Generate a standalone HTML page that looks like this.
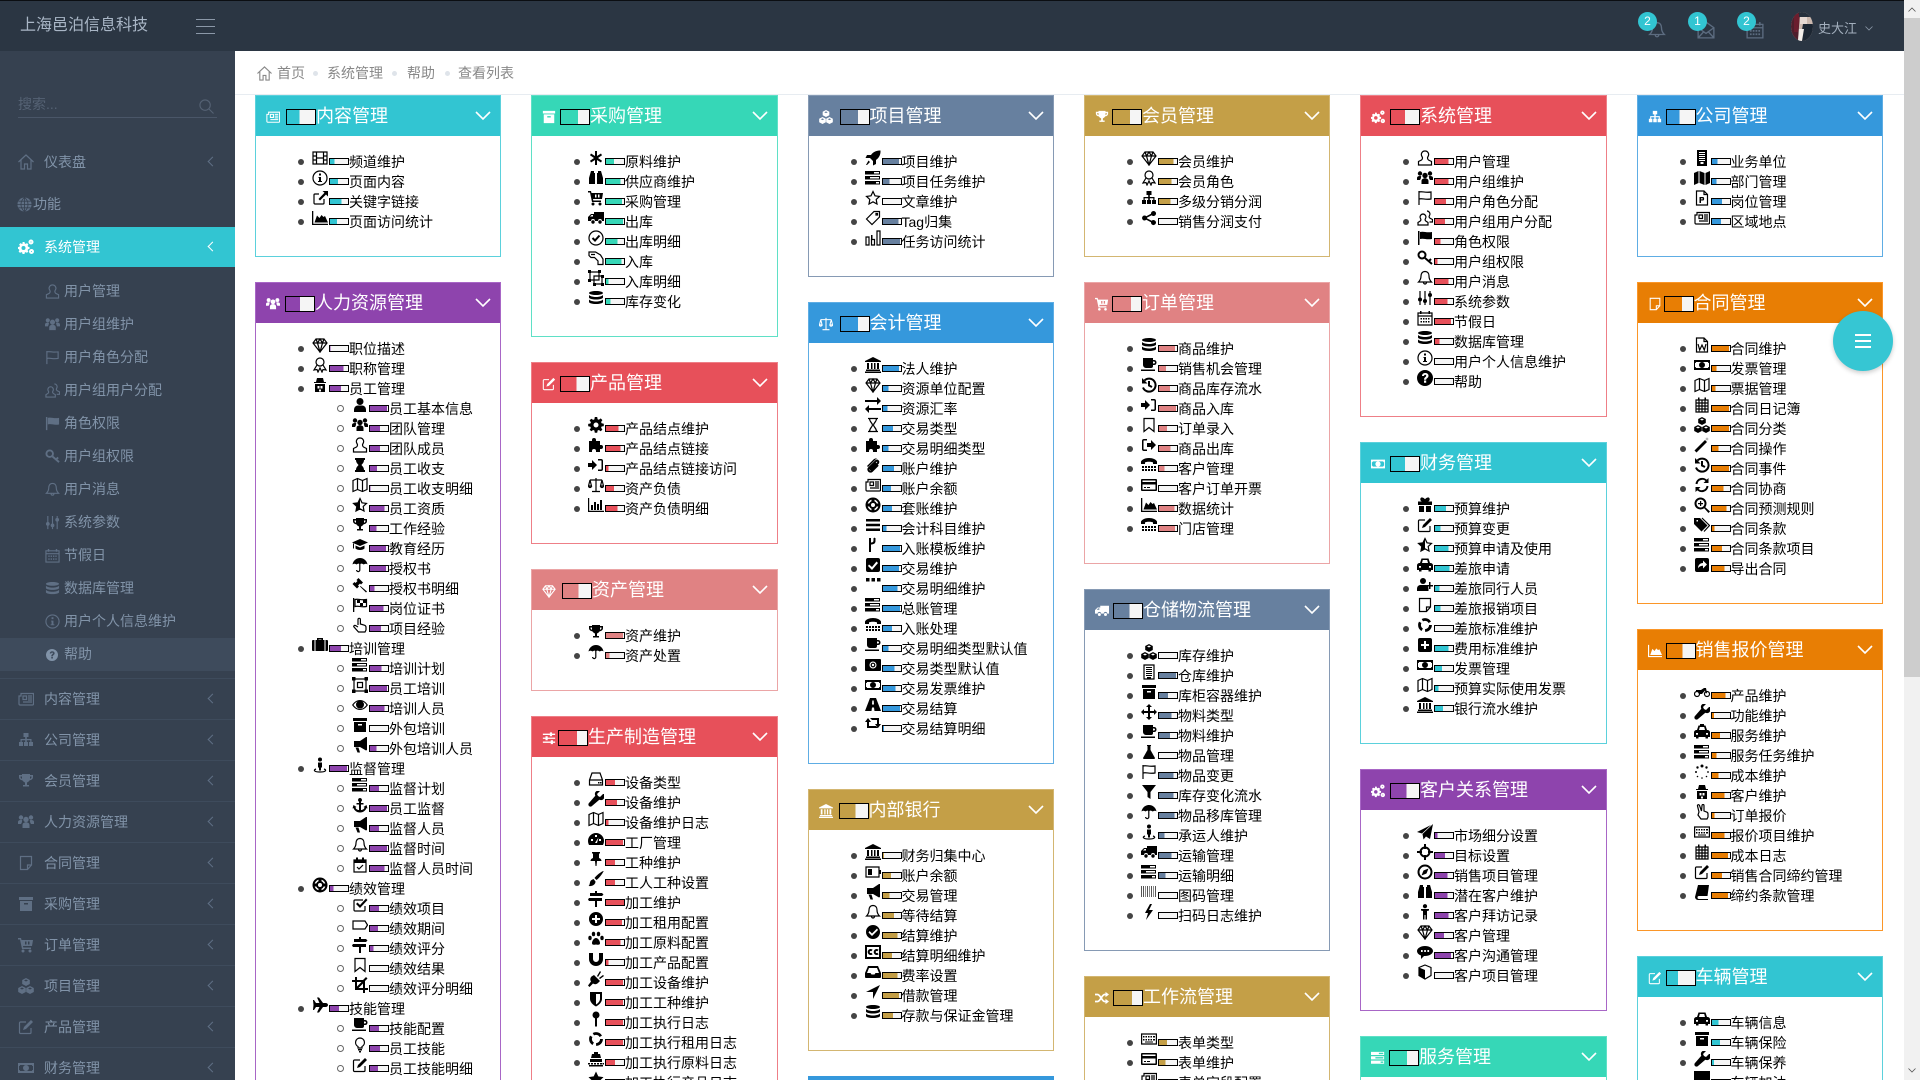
<!DOCTYPE html>
<html lang="zh"><head><meta charset="utf-8"><title>查看列表</title>
<style>
html,body{margin:0;padding:0;width:1920px;height:1080px;overflow:hidden;background:#fff;font:14px "Liberation Sans","WenQuanYi Zen Hei",sans-serif;color:#000}
#root{position:absolute;left:0;top:0;width:1920px;height:1080px;overflow:hidden;background:#fff}
svg{fill:currentColor}
.o{fill:none;stroke:currentColor;stroke-width:1.2}
.o2{fill:none;stroke:currentColor;stroke-width:2}
#top{position:absolute;left:0;top:0;width:1904px;height:51px;background:#2b3643;border-top:1px solid #0b0e12;box-sizing:border-box}
#logo{position:absolute;left:20px;top:0;line-height:49px;font-size:16px;color:#a9b6c6}
#burger{position:absolute;left:196px;top:18px;width:19px;height:13px;border-top:1px solid #8b98a8;border-bottom:1px solid #8b98a8}
#burger:after{content:"";position:absolute;left:0;right:0;top:6px;height:1px;background:#8b98a8}
.tb{position:absolute;top:20px;width:18px;height:18px;color:#5c6c80}
.bd{position:absolute;top:11px;width:19px;height:19px;border-radius:50%;background:#32c5d2;color:#fff;font-size:12px;line-height:19px;text-align:center}
#nm{position:absolute;left:1818px;top:0;line-height:56px;font-size:13px;color:#a3afbd}
#side{position:absolute;left:0;top:51px;width:235px;height:1029px;background:#364150;overflow:hidden}
.m,.s{position:absolute;left:0;width:235px;color:#8193a8;white-space:nowrap}
.m{height:40px;line-height:40px;text-indent:44px}
.s{height:33px;line-height:33px;text-indent:64px}
.m svg,.s svg{position:absolute;color:#5f6f84}
.m svg{left:18px;top:12px;width:16px;height:16px}
.s svg{left:45px;top:9px;width:15px;height:15px}
.m i{position:absolute;left:209px;top:16px;width:6px;height:6px;border-left:1.2px solid #5f6f84;border-bottom:1.2px solid #5f6f84;transform:rotate(45deg)}
.dv{position:absolute;left:0;width:235px;height:1px;background:#3e4b5c}
#crumb{position:absolute;left:235px;top:51px;width:1669px;height:44px;box-sizing:border-box;border-bottom:1px solid #e7ecf1;color:#888;line-height:45px;background:#fff}
#crumb span{position:absolute;top:0;white-space:nowrap}
#crumb u{position:absolute;top:20px;width:5px;height:5px;border-radius:50%;background:#dfe4ea}
.c{position:absolute;width:246px;box-sizing:border-box;border:1px solid var(--b);background:#fff;overflow:hidden}
.w{width:247px}
.c h3{position:relative;margin:0;height:40px;background:var(--c);color:#fff;font-size:18px;font-weight:400;line-height:40px;padding-left:calc(var(--l) + 29px);white-space:nowrap}
.c h3>svg:first-child{position:absolute;left:10px;top:14px;width:14px;height:14px;color:#fff}
.c h3 b{position:absolute;left:calc(var(--l) - 1px);top:13px;width:30px;height:16px;box-sizing:border-box;border:1px solid #000;background:linear-gradient(90deg,var(--c) var(--p),#f5f5f5 0)}
.c h3 .v{position:absolute;left:219px;top:15px;width:16px;height:10px;color:#fff}
.w h3 .v{left:220px}
.c ul{list-style:none;margin:16px 0 0;padding:0 0 0 55px}
.c ul ul{margin:0;padding-left:40px}
.c li{position:relative;line-height:20px;white-space:nowrap}
.c li>span{display:block;height:20px;padding-left:38px}
.c li:before{content:"";position:absolute;left:-13px;top:7px;width:6px;height:6px;border-radius:50%;background:#444}
.c ul ul>li:before{left:-14px;top:6px;width:5px;height:5px;background:#fff;border:1.3px solid #666}
.c li svg{position:absolute;left:1px;top:-2px;width:16px;height:16px}
.c li b{position:absolute;left:18px;top:6px;width:20px;height:7px;box-sizing:border-box;border:1px solid #000;background:linear-gradient(90deg,var(--c) var(--p),#f5f5f5 0)}
.cy{--c:#32c5d2;--b:#5bd1dc}.pu{--c:#8e44ad;--b:#a866c6}.te{--c:#36d7b7;--b:#5fe0c6}.re{--c:#e7505a;--b:#ee7f87}.pi{--c:#e08283;--b:#eba5a6}.st{--c:#67809f;--b:#869ab4}.ye{--c:#c49f47;--b:#d3b671}.bl{--c:#3598dc;--b:#5eade4}.or{--c:#e87e04;--b:#fb9628}
#sb{position:absolute;left:1904px;top:0;width:16px;height:1080px;background:#f1f1f1}
#th{position:absolute;left:0;top:18px;width:16px;height:659px;background:#cdcdcd}
#fab{position:absolute;left:1833px;top:311px;width:60px;height:60px;border-radius:50%;background:#36c6d3;box-shadow:0 2px 5px rgba(0,0,0,.2)}
#fab i{position:absolute;left:22px;width:16px;height:2px;background:#fff}
</style></head><body>
<svg width="0" height="0" style="position:absolute"><defs>
<symbol id="film" viewBox="0 0 16 16"><path class="o" d="M1 2h14v12H1zM4.500 2v12M11.500 2v12M1 6h3.500M1 10h3.500M11.500 6H15M11.500 10H15M4.500 8h7"/></symbol>
<symbol id="info" viewBox="0 0 16 16"><circle class="o" cx="8" cy="8" r="7"/><path d="M7 3.500h2v2H7zM6.500 7H9v4h1v1H6v-1h1V8h-.5z"/></symbol>
<symbol id="ext" viewBox="0 0 16 16"><path class="o" d="M12 9v4a1 1 0 0 1-1 1H3a1 1 0 0 1-1-1V5a1 1 0 0 1 1-1h4"/><path d="M6.500 9l6-6.200L10.500 1H16v5.500l-2-2L8 10.500z"/></symbol>
<symbol id="area" viewBox="0 0 16 16"><path d="M0 1h1.300v12.700H16V15H0zM2.500 12.500l2.500-7 2.500 2.500 2-3 2 2 1.500-1 3 6.500z"/></symbol>
<symbol id="diamond" viewBox="0 0 16 16"><path class="o" d="M4 2h8l3 4-7 9-7-9zM1 6h14M5.500 6L8 15l2.500-9M4 2l1.500 4L8 2l2.500 4L12 2"/></symbol>
<symbol id="award" viewBox="0 0 16 16"><circle class="o" cx="8" cy="5" r="4"/><path class="o" d="M5 8L2 13l3-.5 1 2.500 2-4 2 4 1-2.500 3 .5-3-5"/></symbol>
<symbol id="secret" viewBox="0 0 16 16"><path fill-rule="evenodd" d="M5 1h6l1 4h2v1H2V5h2zM3 7h10v8H3zM5.500 9v2.500h2V9zM8.500 9v2.500h2V9zM7 12.500v2h2v-2z"/></symbol>
<symbol id="user" viewBox="0 0 16 16"><circle cx="8" cy="4.500" r="3.500"/><path d="M2 15v-2c0-3 2-4.500 4-4.500h4c2 0 4 1.500 4 4.500v2z"/></symbol>
<symbol id="users" viewBox="0 0 16 16"><circle cx="8" cy="5.500" r="2.700"/><circle cx="3" cy="3.500" r="2.200"/><circle cx="13" cy="3.500" r="2.200"/><path d="M4.500 14v-3c0-1.700 1.500-2.800 3.500-2.800s3.500 1.100 3.500 2.800v3zM0 10V8c0-1.200 1-2 3-2 .7 0 1 .2 1.300.5-.5.9-.3 1.700-.6 2.300C3.300 9.300 3.200 9.600 3.200 10zM16 10V8c0-1.200-1-2-3-2-.7 0-1 .2-1.300.5.5.9.3 1.700.6 2.300.4.500.5.800.5 1.200z"/></symbol>
<symbol id="usero" viewBox="0 0 16 16"><path class="o" d="M8 1a3.500 3.500 0 0 1 3 5.500c-.8 1.200-.5 2.800.5 3.500l3 1.500V15h-13v-3.500l3-1.500c1-.7 1.300-2.300.5-3.500A3.500 3.500 0 0 1 8 1z"/></symbol>
<symbol id="usero2" viewBox="0 0 16 16"><path class="o" d="M10 1a3 3 0 0 1 2.500 4.500c-.6 1-.4 2 .4 2.600l2.600 1.400V12h-3M6 4a3 3 0 0 1 2.500 4.500c-.6 1-.4 2 .4 2.600l2.100 1.400V15H1v-2.500l2.100-1.400c.8-.6 1-1.600.4-2.600A3 3 0 0 1 6 4z"/></symbol>
<symbol id="hour" viewBox="0 0 16 16"><path d="M3 1h10v2h-1c0 3-2 4-2.500 5 .5 1 2.500 2 2.500 5h1v2H3v-2h1c0-3 2-4 2.500-5C6 7 4 6 4 3H3z"/></symbol>
<symbol id="hourg" viewBox="0 0 16 16"><path class="o" d="M3 1.500h10M3 14.500h10M4.500 1.500c0 3.500 3 4.500 3 6.500s-3 3-3 6.500M11.500 1.500c0 3.500-3 4.500-3 6.500s3 3 3 6.500"/></symbol>
<symbol id="map" viewBox="0 0 16 16"><path class="o" d="M1 3.500l4.500-2 5 2 4.500-2v11l-4.500 2-5-2-4.500 2zM5.500 1.500v11M10.500 3.500v11"/></symbol>
<symbol id="mapf" viewBox="0 0 16 16"><path d="M0 3l4.500-2v12L0 15zM5.500 1l5 2v12l-5-2zM11.500 3L16 1v12l-4.500 2z"/></symbol>
<symbol id="star" viewBox="0 0 16 16"><path d="M8 .5l2.300 4.900 5.200.7-3.800 3.700.9 5.200L8 12.500l-4.600 2.500.9-5.200L.5 6.100l5.200-.7z"/></symbol>
<symbol id="staro" viewBox="0 0 16 16"><path class="o" d="M8 1.500l2 4.300 4.500.6-3.300 3.100.8 4.500L8 11.800l-4 2.200.8-4.500L1.500 6.400 6 5.800z"/></symbol>
<symbol id="starh" viewBox="0 0 16 16"><path class="o" d="M8 1.500l2 4.300 4.500.6-3.300 3.100.8 4.500L8 11.800l-4 2.200.8-4.500L1.500 6.400 6 5.800z"/><path d="M8 1.500v10.300l-4 2.200.8-4.500L1.500 6.400 6 5.800z"/></symbol>
<symbol id="trophy" viewBox="0 0 16 16"><path fill-rule="evenodd" d="M4 1h8v1h3v2c0 2-1.500 3-3.300 3.300C11 8.500 10 9 9 9.500V12h2v1.500H5V12h2V9.500C6 9 5 8.500 4.300 7.300 2.500 7 1 6 1 4V2h3zM2.500 3.500V4c0 1 .6 1.500 1.500 1.800V3.500zM12 3.500v2.300c.9-.3 1.500-.8 1.500-1.800v-.5z"/></symbol>
<symbol id="grad" viewBox="0 0 16 16"><path d="M8 2L0 5.500 8 9l8-3.500zM3.500 8.500v3c2 2 7 2 9 0v-3L8 10.500zM1 6.500v5h1v-5z"/></symbol>
<symbol id="umb" viewBox="0 0 16 16"><path d="M8 1C4 1 1 4 .5 7.500 2 6.500 3 6.500 4.500 7.500 6 6.500 7 6.500 7.200 7v6a1 1 0 0 1-2 0H4a2.200 2.200 0 0 0 4.400 0V7c.6-.5 1.800-.5 3.300.5 1.300-1 2.800-1 3.800 0C15 4 12 1 8 1z"/></symbol>
<symbol id="gavel" viewBox="0 0 16 16"><path d="M6.500 1L11 5.500l-2 2-1-1-2 2 1 1-2 2L.5 7l2-2 1 1 2-2-1-1zM8.500 9l6.500 5.500-1 1L8 9.500z"/></symbol>
<symbol id="flagc" viewBox="0 0 16 16"><path d="M1 1h1.300v14H1z"/><path class="o" d="M3 2.500c3-1 6 1 11.500 0v7c-5.500 1-8.500-1-11.500 0z"/><path d="M5 3h3v3H5zM8 6h3v3H8zM11 3h3v3h-3z"/></symbol>
<symbol id="hand" viewBox="0 0 16 16"><path class="o" d="M6 8V2.500a1.200 1.200 0 0 1 2.400 0V7l4 1.200c1 .3 1.600 1 1.600 2V13l-1 2H6.500L2 10c-.8-1 .5-2 1.500-1.500L6 10"/></symbol>
<symbol id="peace" viewBox="0 0 16 16"><path class="o" d="M5 8L3.500 2a1 1 0 0 1 2-.5L7.500 7 8 1.500a1 1 0 0 1 2 0V7l3 1.200c.7.300 1 1 1 2V13l-1 2H7L4 11z"/></symbol>
<symbol id="brief" viewBox="0 0 16 16"><path fill-rule="evenodd" d="M5 3V1h6v2h4a1 1 0 0 1 1 1v9a1 1 0 0 1-1 1H1a1 1 0 0 1-1-1V4a1 1 0 0 1 1-1zM6.500 3h3v-.5h-3zM2.500 3v11h1V3zM12.500 3v11h1V3z"/></symbol>
<symbol id="tasks" viewBox="0 0 16 16"><path fill-rule="evenodd" d="M0 1h15v3.500H0zM9 2v1.500h5V2zM0 6h15v3.500H0zM5 7v1.500h9V7zM0 11h15v3.500H0zM11 12v1.500h3V12z"/></symbol>
<symbol id="frame" viewBox="0 0 16 16"><path class="o" d="M2 2h12v12H2zM5.500 5.500h5v5h-5z"/><path d="M0 0h3.500v3.500H0zM12.500 0H16v3.500h-3.500zM0 12.500h3.500V16H0zM12.500 12.500H16V16h-3.500z"/></symbol>
<symbol id="eye" viewBox="0 0 16 16"><path fill-rule="evenodd" d="M8 3C4 3 1.500 6 0 8c1.500 2 4 5 8 5s6.500-3 8-5c-1.500-2-4-5-8-5zM1.500 8c1-1.500 2.500-3 4-3.500a4 4 0 1 0 5 0c1.500.5 3 2 4 3.500-1.500 2.200-4 4-6.500 4s-5-1.800-6.500-4z"/></symbol>
<symbol id="arch" viewBox="0 0 16 16"><path fill-rule="evenodd" d="M1 1h14v3H1zM2 5h12v10H2zM6 7v1.500h4V7z"/></symbol>
<symbol id="bull" viewBox="0 0 16 16"><path d="M15 0v13l-1 .5L8 10H2V4h6l6-4zM3.500 10.500h3l1.500 5H5.500z"/></symbol>
<symbol id="sv" viewBox="0 0 16 16"><circle cx="8" cy="2.500" r="2"/><path d="M6 5.500h4v5H9v3H7v-3H6z"/><path class="o" d="M4 12c-3 1-2 3 4 3s7-2 4-3"/></symbol>
<symbol id="anchor" viewBox="0 0 16 16"><path d="M8 1a2 2 0 0 1 1 3.700V6h2.500v1.500H9V13c2 0 3.200-1.200 3.500-2.500l-1-.5 3-2 1 3.500-1-.5C14 13 11.500 15.500 8 15.500S2 13 1.500 11l-1 .5 1-3.500 3 2-1 .5c.3 1.300 1.500 2.500 3.500 2.500V7.500H4.500V6H7V4.700A2 2 0 0 1 8 1z"/></symbol>
<symbol id="bell" viewBox="0 0 16 16"><path class="o" d="M8 1.500c-3 0-4 2.500-4 4.500 0 3-1.500 5-2.500 6h13c-1-1-2.500-3-2.500-6 0-2-1-4.500-4-4.500zM6.500 12.500a1.500 1.500 0 0 0 3 0"/></symbol>
<symbol id="calc" viewBox="0 0 16 16"><path class="o" d="M2 3h12v12H2z"/><path d="M1.500 3h13v3h-13zM4 .5h2v3H4zM10 .5h2v3h-2z"/><path class="o" d="M5 10l2 2 4-4"/></symbol>
<symbol id="life" viewBox="0 0 16 16"><circle class="o2" cx="8" cy="8" r="6.500"/><circle class="o2" cx="8" cy="8" r="3"/><path d="M6.500 1h3v3.500h-3zM6.500 11.500h3V15h-3zM1 6.500h3.500v3H1zM11.500 6.500H15v3h-3.500z"/></symbol>
<symbol id="chk" viewBox="0 0 16 16"><path fill-rule="evenodd" d="M3 1h10a2 2 0 0 1 2 2v10a2 2 0 0 1-2 2H3a2 2 0 0 1-2-2V3a2 2 0 0 1 2-2zM4 7.500L3 9l4 4 6-7-1.500-1.500L7 10z"/></symbol>
<symbol id="chko" viewBox="0 0 16 16"><path class="o" d="M13 9v4a1 1 0 0 1-1 1H3a1 1 0 0 1-1-1V4a1 1 0 0 1 1-1h8"/><path d="M4 7l1.500-1.500L8 8l6-6.500L15.500 3 8 11z"/></symbol>
<symbol id="tago" viewBox="0 0 16 16"><path class="o" d="M1 4h12l2.500 4-2.500 4H1z"/></symbol>
<symbol id="tag" viewBox="0 0 16 16"><path class="o" d="M1.500 9L9 1.500h5.500V7L7 14.500zM11 3.500h1.500V5H11z"/></symbol>
<symbol id="signs" viewBox="0 0 16 16"><path d="M7 0h2v2h5l1.500 1.500L14 5H2V2h5zM1 7h13v3H9v6H7v-6H1L0 8.500z"/></symbol>
<symbol id="bookm" viewBox="0 0 16 16"><path class="o" d="M3 1.500h10v13l-5-4-5 4z"/></symbol>
<symbol id="crop" viewBox="0 0 16 16"><path fill-rule="evenodd" d="M3 0h2v3h6l3-3 1.500 1.500-2.500 2.500V11h3v2h-3v3h-2v-3H3V5H0V3h3zM5 5v4.500L9.500 5zM6.500 11H11V6.500z"/></symbol>
<symbol id="plane" viewBox="0 0 16 16"><path d="M2 3l2 3h3.500L5 .5h2L11 6h2.500c1.500 0 2.500 1 2.500 2s-1 2-2.500 2H11l-4 5.500H5L7.500 10H4l-2 3H1l.5-5L1 3z"/></symbol>
<symbol id="coffee" viewBox="0 0 16 16"><path fill-rule="evenodd" d="M2 1h10v2h1c1.700 0 2.500 1 2.500 2.500S14.700 8 13 8h-1v1a2 2 0 0 1-2 2H5a3 3 0 0 1-3-3zM12 4.500v2h1c.6 0 1-.5 1-1s-.4-1-1-1zM0 12.500h14V14H0z"/></symbol>
<symbol id="bulb" viewBox="0 0 16 16"><path class="o" d="M8 1a4.500 4.500 0 0 0-2 8.500V11h4V9.500A4.500 4.500 0 0 0 8 1z"/><path d="M6 12h4v1.500H6zM7 14h2v1.500H7z"/></symbol>
<symbol id="edit" viewBox="0 0 16 16"><path class="o" d="M13 9v4.500a1 1 0 0 1-1 1H2.500a1 1 0 0 1-1-1V4a1 1 0 0 1 1-1H8"/><path d="M13 1l2 2-7 7-3 1 1-3z"/></symbol>
<symbol id="aster" viewBox="0 0 16 16"><path d="M7 1h2v5l4-2.500 1 1.700L10 8l4 2.800-1 1.700L9 10v5H7v-5l-4 2.500-1-1.700L6 8 2 5.200l1-1.700L7 6z"/></symbol>
<symbol id="binoc" viewBox="0 0 16 16"><path d="M3 1h3v2h1v11H1V8zM10 1h3l2 7v6H9V3h1z"/></symbol>
<symbol id="cart" viewBox="0 0 16 16"><path fill-rule="evenodd" d="M0 1h3l.5 2H15l-1 6H5l.3 1.500H13V12H4L2 2.500H0zM7 4.500v3h1.500v-3zM10 4.500v3h1.500v-3z"/><circle cx="5" cy="14" r="1.500"/><circle cx="12" cy="14" r="1.500"/></symbol>
<symbol id="truck" viewBox="0 0 16 16"><path fill-rule="evenodd" d="M6 2h10v9h-2a2 2 0 0 0-4 0H7a2 2 0 0 0-4 0H0V7l3-3h3zM2 6.500h3V5H3.500z"/><circle cx="5" cy="12" r="1.700"/><circle cx="12" cy="12" r="1.700"/></symbol>
<symbol id="checkc" viewBox="0 0 16 16"><circle class="o" cx="8" cy="8" r="7"/><path class="o2" d="M4.500 8l2.500 2.500 4.500-5"/></symbol>
<symbol id="checkf" viewBox="0 0 16 16"><path fill-rule="evenodd" d="M8 1a7 7 0 1 0 0 14A7 7 0 0 0 8 1zM4.500 7L3.500 8.500 7 12l6-6-1-1.500-5 5z"/></symbol>
<symbol id="lizard" viewBox="0 0 16 16"><path class="o" d="M1 2h6.500l5 3 2.500 4v5.500h-5V11L6.500 7.500H3L1 5.500zM3 4.500h4"/></symbol>
<symbol id="objg" viewBox="0 0 16 16"><path class="o" d="M2 2h9v8H2zM6 6h8v8H6z"/><path d="M0 0h3v3H0zM10 0h3v3h-3zM0 9h3v3H0zM13 5h3v3h-3zM13 13h3v3h-3zM5 13h3v3H5z"/></symbol>
<symbol id="db" viewBox="0 0 16 16"><path d="M8 1c4 0 7 .9 7 2s-3 2-7 2-7-.9-7-2 3-2 7-2zM1 5c1 1.200 4 2 7 2s6-.8 7-2v2.500c0 1.100-3 2-7 2s-7-.9-7-2zM1 9.500c1 1.200 4 2 7 2s6-.8 7-2V12c0 1.100-3 2-7 2s-7-.9-7-2z"/></symbol>
<symbol id="cog" viewBox="0 0 16 16"><path fill-rule="evenodd" d="M6.800 0h2.400l.4 2.200 1.300.5 1.800-1.300 1.700 1.700L13.100 5l.5 1.300 2.200.4v2.400l-2.200.4-.5 1.300 1.300 1.800-1.700 1.700-1.800-1.300-1.300.5-.4 2.200H6.800l-.4-2.200-1.300-.5-1.800 1.300-1.700-1.700L2.900 11l-.5-1.300-2.200-.4V6.900l2.200-.4.500-1.300-1.300-1.800 1.700-1.700 1.800 1.200 1.300-.5zM8 5.500a2.500 2.500 0 1 0 0 5 2.500 2.500 0 0 0 0-5z"/></symbol>
<symbol id="cogs" viewBox="0 0 16 16"><path fill-rule="evenodd" d="M4.500 3h2l.3 1.500.9.400 1.300-.8 1.400 1.400-.8 1.300.4.900 1.500.3v2l-1.500.3-.4.900.8 1.300-1.400 1.400-1.300-.8-.9.4-.3 1.500h-2l-.3-1.500-.9-.4-1.300.8-1.400-1.400.8-1.300-.4-.9L0 10V8l1.500-.3.400-.9-.8-1.300 1.400-1.400 1.300.8.900-.4zM5.500 7a2 2 0 1 0 0 4 2 2 0 0 0 0-4z"/><circle class="o2" cx="13" cy="3" r="1.500"/><circle class="o2" cx="13.500" cy="12.500" r="1.500"/></symbol>
<symbol id="puzzle" viewBox="0 0 16 16"><path d="M6 1a2 2 0 0 1 2 2v1h4v4h1a2 2 0 0 1 0 4h-1v3H8v-1a2 2 0 0 0-4 0v1H1V4h3V3a2 2 0 0 1 2-2z"/></symbol>
<symbol id="signin" viewBox="0 0 16 16"><path d="M0 6h4V3l5 5-5 5v-3H0zM10 2h3a2 2 0 0 1 2 2v8a2 2 0 0 1-2 2h-3v-1.500h3c.3 0 .5-.2.5-.5V4c0-.3-.2-.5-.5-.5h-3z"/></symbol>
<symbol id="signout" viewBox="0 0 16 16"><path d="M6 2v1.500H3c-.3 0-.5.2-.5.5v8c0 .3.2.5.5.5h3V14H3a2 2 0 0 1-2-2V4a2 2 0 0 1 2-2zM6 6h4V3l5 5-5 5v-3H6z"/></symbol>
<symbol id="balance" viewBox="0 0 16 16"><path class="o" d="M8 1v13M4 14.500h8M2 3h12M2 3L.5 9h3zM14 3l-1.500 6h3zM.5 9a1.500 1.500 0 0 0 3 0M12.500 9a1.500 1.500 0 0 0 3 0"/></symbol>
<symbol id="bars" viewBox="0 0 16 16"><path d="M0 1h1.200v12.800H16V15H0zM3 8h2v5H3zM6 5h2v8H6zM9 7h2v6H9zM12 3h2v10h-2z"/></symbol>
<symbol id="barso" viewBox="0 0 16 16"><path class="o" d="M1 7h3v8H1zM6.500 9.500h3V15h-3zM12 1h3v14h-3z"/><path d="M6 5h1.500v4H6z"/></symbol>
<symbol id="hdd" viewBox="0 0 16 16"><path class="o" d="M4 2h8l2.500 7v5h-13V9zM1.500 9h13"/><path d="M10 11h1.500v1.500H10zM12 11h1.500v1.500H12z"/></symbol>
<symbol id="wrench" viewBox="0 0 16 16"><path d="M15 3l-3 3-2-1-1-2 3-3c-2-1-4.500 0-5 2-.3 1.200 0 2 .3 2.700L1 12a2 2 0 0 0 3 3l7.300-6.300c.7.300 1.500.6 2.700.3 2-.5 3-3 2-6z"/></symbol>
<symbol id="dash" viewBox="0 0 16 16"><path fill-rule="evenodd" d="M8 2a8 8 0 0 0-8 8c0 1.500.5 3 1 4h14c.5-1 1-2.500 1-4a8 8 0 0 0-8-8zM7 4v2h2V4zM3 8v2h2V8zM11 8v2h2V8zM7 12h2L10.500 6.500z"/></symbol>
<symbol id="pin" viewBox="0 0 16 16"><path d="M4 1h8v1.500h-1V7c1.500.5 2.500 1.500 2.500 3H9l-.5 5h-1L7 10H2.500c0-1.500 1-2.500 2.500-3V2.500H4z"/></symbol>
<symbol id="brush" viewBox="0 0 16 16"><path d="M15.500 0c.5.5-4 7-7 9l-2-2c2-3 8.500-7.500 9-7zM5.500 8l2 2.500c0 3-3 5-7 4.500 1.500-1 1-3 2-5 .5-1 2-1.500 3-2z"/></symbol>
<symbol id="plusc" viewBox="0 0 16 16"><path fill-rule="evenodd" d="M8 1a7 7 0 1 0 0 14A7 7 0 0 0 8 1zM7 4h2v3h3v2H9v3H7V9H4V7h3z"/></symbol>
<symbol id="paw" viewBox="0 0 16 16"><ellipse cx="5.500" cy="3" rx="1.700" ry="2.300"/><ellipse cx="10.500" cy="3" rx="1.700" ry="2.300"/><ellipse cx="2" cy="7" rx="1.700" ry="2.200"/><ellipse cx="14" cy="7" rx="1.700" ry="2.200"/><path d="M8 7c2 0 4 3 4 5s-1.500 2-4 1.500C5.500 14 4 14 4 12s2-5 4-5z"/></symbol>
<symbol id="magnet" viewBox="0 0 16 16"><path d="M1 2h4v6a3 3 0 0 0 6 0V2h4v6a7 7 0 0 1-14 0z"/></symbol>
<symbol id="plug" viewBox="0 0 16 16"><path d="M9 5l3-5 1 1-3 5zM11 7l4-3 1 1-4 3zM6 4l6 6-2 2c-1.500 1.500-3.500 1.500-5 .5L1.500 16 0 14.500l3-4c-1-1.500-1-3.500.5-5z"/></symbol>
<symbol id="shield" viewBox="0 0 16 16"><path fill-rule="evenodd" d="M2 1h12v7c0 3-3 6-6 7.500C5 14 2 11 2 8zM8 3v10.500c2-1 4-3.500 4-5.500V3z"/></symbol>
<symbol id="mappin" viewBox="0 0 16 16"><circle cx="8" cy="4" r="3.500"/><path d="M7 7h2v8.500H7z"/></symbol>
<symbol id="recycle" viewBox="0 0 16 16"><circle cx="8" cy="8" r="5.500" fill="none" stroke="currentColor" stroke-width="2.800" stroke-dasharray="8.500 3"/></symbol>
<symbol id="ship" viewBox="0 0 16 16"><path d="M6 1h4v2h2l1 4H3l1-4h2zM2 8h12v3H2z"/><path d="M0 12h2v1.500H0zM3 12h2v1.500H3zM6 12h2v1.500H6zM9 12h2v1.500H9zM12 12h2v1.500h-2zM14.500 12H16v1.500h-1.500zM1 14h14v1.500H1z"/></symbol>
<symbol id="rocket" viewBox="0 0 16 16"><path d="M15.500.5c.3 4-1.500 7.500-4.500 9.500v4L8 15.500V11L5 8H.5L2 5h4C8 2 11.500.2 15.500.5zM3.500 10.500L5 12l-3 3H1z"/></symbol>
<symbol id="bank" viewBox="0 0 16 16"><path d="M8 0l8 4v1H0V4zM2 6h2v6H2zM6 6h1.500v6H6zM9 6h1.500v6H9zM12 6h2v6h-2zM1 12.500h14V14H1zM0 14.500h16V16H0z"/></symbol>
<symbol id="exch" viewBox="0 0 16 16"><path d="M0 3h12V0l4 4-4 4V5H0zM16 11H4V8l-4 4 4 4v-3h12z"/></symbol>
<symbol id="clip" viewBox="0 0 16 16"><path class="o2" d="M13 8l-6 6c-2 2-5-1-3-3l7-7c1-1 3 0 2 2l-6 6c-1 1-2 0-1-1l5-5"/><path d="M2 9l7-7 3-1-9 9z"/></symbol>
<symbol id="news" viewBox="0 0 16 16"><path class="o" d="M3 2.500h12.500V13a1 1 0 0 1-1 1H2a1 1 0 0 1-1-1V5h2zM5 5v3.500h3.500V5zM10 5h4M10 7h4M10 9h4M5 11h9"/></symbol>
<symbol id="bars3" viewBox="0 0 16 16"><path d="M1 2h14v2.500H1zM1 6.800h14v2.500H1zM1 11.500h14V14H1z"/></symbol>
<symbol id="fork" viewBox="0 0 16 16"><path d="M4 1h2v4.500c1.500 0 2.500-.5 2.500-2V2H8l1.500-1.500L11 2h-.5v2c0 2.500-2 3.500-4.500 3.500V15H4z"/></symbol>
<symbol id="dots" viewBox="0 0 16 16"><path d="M1 1h3.500v3.500H1zM6.500 1H10v3.500H6.500zM12 1h3.500v3.500H12z"/></symbol>
<symbol id="tty" viewBox="0 0 16 16"><path d="M8 1c4 0 7 1.500 8 3.500V7h-4V5.500C11 4.500 5 4.500 4 5.500V7H0V4.500C1 2.500 4 1 8 1zM1 9h2v2H1zM4 9h2v2H4zM7 9h2v2H7zM10 9h2v2h-2zM13 9h2v2h-2zM1 12h2v2H1zM4 12h2v2H4zM7 12h2v2H7zM10 12h2v2h-2zM13 12h2v2h-2z"/></symbol>
<symbol id="camera" viewBox="0 0 16 16"><path fill-rule="evenodd" d="M1 2h14a1 1 0 0 1 1 1v10a1 1 0 0 1-1 1H1a1 1 0 0 1-1-1V3a1 1 0 0 1 1-1zM8 4.500a3.500 3.500 0 1 0 0 7 3.500 3.500 0 0 0 0-7z"/><circle class="o" cx="8" cy="8" r="1.800"/></symbol>
<symbol id="money" viewBox="0 0 16 16"><path fill-rule="evenodd" d="M0 3h16v10H0zM2 5c0 .8-.3 1-1 1v4c.7 0 1 .2 1 1h12c0-.8.3-1 1-1V6c-.7 0-1-.2-1-1zM8 5a3 3 0 1 0 0 6 3 3 0 0 0 0-6z"/><path d="M7 6.500h1.500V10H7z"/></symbol>
<symbol id="road" viewBox="0 0 16 16"><path fill-rule="evenodd" d="M5 1h6l5 13H9.500L9 10.500H7L6.500 14H0zM7.300 3.500L7 7.500h2l-.3-4z"/></symbol>
<symbol id="retw" viewBox="0 0 16 16"><path d="M3 1l3 4H4v4h7l2 2H2V5H0zM5 1h9v6h2l-3 4-3-4h2V3H7z"/></symbol>
<symbol id="shuf" viewBox="0 0 16 16"><path class="o2" d="M0 4h3c3 0 5 8 8 8h2M0 12h3c3 0 5-8 8-8h2"/><path d="M12 1l4 3-4 3zM12 9l4 3-4 3z"/></symbol>
<symbol id="slid" viewBox="0 0 16 16"><path d="M1 3h14v1.500H1zM1 7.500h14V9H1zM1 12h14v1.500H1zM9 1.500h2.500V6H9zM4 6h2.500v4.500H4zM10 10.500h2.500V15H10z"/></symbol>
<symbol id="batt" viewBox="0 0 16 16"><path class="o" d="M1 3h13v10H1z"/><path d="M14.500 6H16v4h-1.500zM3 5h4v6H3z"/></symbol>
<symbol id="cc" viewBox="0 0 16 16"><path fill="#fff" d="M0 1h16v14H0z"/><path class="o2" d="M1 2h14v12H1zM7 6.500a2 2 0 1 0 0 3M13 6.500a2 2 0 1 0 0 3"/></symbol>
<symbol id="inbox" viewBox="0 0 16 16"><path fill-rule="evenodd" d="M3 2h10l3 7v4a1 1 0 0 1-1 1H1a1 1 0 0 1-1-1V9zM4 4L2 9h3.500l1 1.500h3l1-1.500H14l-2-5z"/></symbol>
<symbol id="larr" viewBox="0 0 16 16"><path d="M15 1L8 15V8H1z"/></symbol>
<symbol id="site" viewBox="0 0 16 16"><path d="M5.500 1h5v4H8.800v2h4.700v3H15v4h-4v-4h1.300V8.300H8.800V10H10v4H6v-4h1.200V8.300H3.700V10H5v4H1v-4h1.500V7h4.700V5H5.500z"/></symbol>
<symbol id="share" viewBox="0 0 16 16"><path d="M12.500 1a2.500 2.500 0 1 1-1.800 4.200L6 7.600a2.500 2.500 0 0 1 0 .8l4.700 2.400a2.500 2.500 0 1 1-.7 1.400L5.300 9.800a2.500 2.500 0 1 1 0-3.600L10 3.800A2.500 2.500 0 0 1 12.500 1z"/></symbol>
<symbol id="hist" viewBox="0 0 16 16"><path class="o2" d="M3.500 3.500a6.500 6.500 0 1 1-1.500 7M8 4v4.500l3 1.500"/><path d="M1 1v5.500h5.500z"/></symbol>
<symbol id="card" viewBox="0 0 16 16"><path fill-rule="evenodd" d="M1 2h14a1 1 0 0 1 1 1v10a1 1 0 0 1-1 1H1a1 1 0 0 1-1-1V3a1 1 0 0 1 1-1zM1.500 3.500V5h13V3.500zM1.500 7.500v5h13v-5zM3 10h2v1H3zM6 10h3v1H6z"/></symbol>
<symbol id="cubes" viewBox="0 0 16 16"><path fill-rule="evenodd" d="M8 0l3.800 2v4L8 8 4.200 6V2zM8 1.500L6 2.500l2 1 2-1zM4 8l3.800 2v4L4 16 .2 14v-4zM4 9.500l-2 1 2 1 2-1zM12 8l3.800 2v4L12 16l-3.800-2v-4zM12 9.500l-2 1 2 1 2-1z"/></symbol>
<symbol id="build" viewBox="0 0 16 16"><path class="o" d="M3 1h10v14H3z"/><path d="M5 3h6v1H5zM5 5h6v1H5zM5 7h6v1H5zM5 9h6v1H5zM5 11h6v1H5zM6 13h4v2H6z"/></symbol>
<symbol id="buildf" viewBox="0 0 16 16"><path fill-rule="evenodd" d="M3 0h10v16H3zM5 2v1h6V2zM5 4v1h6V4zM5 6v1h6V6zM5 8v1h6V8zM5 10v1h6v-1zM6.500 12v2h3v-2z"/></symbol>
<symbol id="arrows" viewBox="0 0 16 16"><path d="M8 0l3 3H9v4h4V5l3 3-3 3V9H9v4h2l-3 3-3-3h2V9H3v2L0 8l3-3v2h4V3H5z"/></symbol>
<symbol id="flask" viewBox="0 0 16 16"><path d="M6 1h4v1H9.500v4L14 14a1 1 0 0 1-1 1H3a1 1 0 0 1-1-1l4.500-8V2H6z"/></symbol>
<symbol id="flago" viewBox="0 0 16 16"><path class="o" d="M2 1v14M2 2c3-1 6 1 12 0v7c-6 1-9-1-12 0"/></symbol>
<symbol id="flag" viewBox="0 0 16 16"><path d="M1 1h1.500v14H1zM3 2c4-1 6 1 12 0v7c-6 1-8-1-12 0z"/></symbol>
<symbol id="filter" viewBox="0 0 16 16"><path d="M1 1h14L9.500 8v7l-3-2V8z"/></symbol>
<symbol id="bolt" viewBox="0 0 16 16"><path d="M9 0L4 9h3l-2 7 7-10H8l3-6z"/></symbol>
<symbol id="barcode" viewBox="0 0 16 16"><path fill="#555" d="M0 2h1v11H0zM2 2h1v11H2zM4 2h.7v11H4zM6 2h1v11H6zM8 2h.7v11H8zM10 2h1v11h-1zM12 2h.7v11H12zM14 2h1v11h-1z"/></symbol>
<symbol id="kbd" viewBox="0 0 16 16"><path class="o" d="M.6 3h14.800v10H.6z"/><path d="M2 5h1.500v1.500H2zM4.500 5H6v1.500H4.500zM7 5h1.500v1.500H7zM9.500 5H11v1.500H9.500zM12 5h2v1.500h-2zM2 8h1.500v1.500H2zM4.500 8H6v1.500H4.500zM7 8h1.500v1.500H7zM9.500 8H11v1.500H9.500zM12 8h2v1.500h-2zM4 10.500h8v1H4z"/></symbol>
<symbol id="key" viewBox="0 0 16 16"><circle class="o2" cx="5" cy="5" r="3.500"/><path class="o2" d="M8 8l7 6M12 11l2-2"/></symbol>
<symbol id="sliders" viewBox="0 0 16 16"><path class="o" d="M3 1v14M8 1v14M13 1v14"/><circle cx="3" cy="9.500" r="2"/><circle cx="8" cy="11" r="2"/><circle cx="13" cy="5" r="2"/></symbol>
<symbol id="cal" viewBox="0 0 16 16"><path class="o" d="M1 3h14v12H1zM1 6h14"/><path d="M3 1h1.500v3H3zM11.500 1H13v3h-1.500zM3.500 8H5v1.500H3.500zM6 8h1.500v1.500H6zM8.500 8H10v1.500H8.500zM11 8h1.500v1.500H11zM3.500 11H5v1.500H3.500zM6 11h1.500v1.500H6zM8.500 11H10v1.500H8.500zM11 11h1.500v1.500H11z"/></symbol>
<symbol id="calg" viewBox="0 0 16 16"><path class="o" d="M2 3h12v12H2zM2 6h12M2 9h12M2 12h12M5 3v12M8 3v12M11 3v12"/><path d="M4 .5h1.500v3H4zM10.500.5H12v3h-1.500z"/></symbol>
<symbol id="quest" viewBox="0 0 16 16"><path fill-rule="evenodd" d="M8 0a8 8 0 1 0 0 16A8 8 0 0 0 8 0zM7 10.500h2.200v2.200H7zM5 6c0-2 1.500-3 3.200-3C10 3 11.500 4 11.500 5.700c0 2.300-2.300 2.300-2.300 4H7c0-2.500 2.200-2.700 2.200-4 0-.5-.4-.9-1-.9-.7 0-1.100.5-1.200 1.200z"/></symbol>
<symbol id="gift" viewBox="0 0 16 16"><path d="M1 4.500h14V8H1zM2 9h5v6H2zM9 9h5v6H9z"/><path class="o2" d="M8 4C6 .5 3.500 1 4.500 3 5 4 7 4 8 4c1 0 3 0 3.500-1 1-2-1.500-2.500-3.500 1z"/></symbol>
<symbol id="car" viewBox="0 0 16 16"><path fill-rule="evenodd" d="M3 6l1.500-4.500h7L13 6c2 0 3 1 3 2.500V13h-2v1.500h-2.500V13h-7v1.500H2V13H0V8.500C0 7 1 6 3 6zM5 6h6l-.8-3H5.800zM2 9v1.800h2V9zM12 9v1.800h2V9z"/></symbol>
<symbol id="taxi" viewBox="0 0 16 16"><path fill-rule="evenodd" d="M6 0h4v1.500h1.500L13 6c2 0 3 1 3 2.500V13h-2v1.500h-2.500V13h-7v1.500H2V13H0V8.500C0 7 1 6 3 6l1.500-4.500H6zM5 6h6l-.8-3H5.800zM2 9v1.800h2V9zM12 9v1.800h2V9z"/></symbol>
<symbol id="userp" viewBox="0 0 16 16"><circle cx="6" cy="4" r="3"/><path d="M0 14v-2c0-3 2-4 3.500-4h5c1.500 0 3 1 3 4v2zM12 5h1.500v3H16v1.500h-2.500V12H12V9.500H9.500V8H12z"/></symbol>
<symbol id="sticky" viewBox="0 0 16 16"><path class="o" d="M2.500 1.500h11V10l-4 4.500h-7zM13.500 10h-4v4.500"/></symbol>
<symbol id="medkit" viewBox="0 0 16 16"><path fill-rule="evenodd" d="M3 1h10a2 2 0 0 1 2 2v10a2 2 0 0 1-2 2H3a2 2 0 0 1-2-2V3a2 2 0 0 1 2-2zM7 4v3H4v2h3v3h2V9h3V7H9V4z"/></symbol>
<symbol id="send" viewBox="0 0 16 16"><path d="M16 0l-3 15-4-2.500-2.500 3L5.500 10zM0 8l14-7L5 9.500z"/></symbol>
<symbol id="cross" viewBox="0 0 16 16"><circle class="o2" cx="8" cy="8" r="4.500"/><path d="M7 0h2v5H7zM7 11h2v5H7zM0 7h5v2H0zM11 7h5v2h-5z"/></symbol>
<symbol id="compass" viewBox="0 0 16 16"><circle class="o2" cx="8" cy="8" r="6.500"/><path d="M11.500 4.500L9.500 9.500 4.500 11.500l2-5z"/></symbol>
<symbol id="male" viewBox="0 0 16 16"><circle cx="8" cy="2.200" r="2.100"/><path d="M4 5h8v1.500l-2 .5v8.500H8.500V11h-1v4.500H6V7l-2-.5z"/></symbol>
<symbol id="comment" viewBox="0 0 16 16"><path fill-rule="evenodd" d="M8 2c4.400 0 8 2.300 8 5s-3.600 5-8 5H7l-3 3v-3.500C1.700 10.700 0 9 0 7c0-2.700 3.600-5 8-5zM4 6v2h1.700V6zM7.200 6v2h1.700V6zM10.400 6v2h1.700V6z"/></symbol>
<symbol id="cube" viewBox="0 0 16 16"><path class="o" d="M8 1l6 2.500v8L8 15l-6-3.500v-8z"/><path d="M2 3.500L8 6v9l-6-3.500z"/></symbol>
<symbol id="filep" viewBox="0 0 16 16"><path class="o" d="M2.500 1H10l3.500 3.500V15h-11zM10 1v3.500h3.500"/><path d="M5.500 7H9c1.500 0 1.500 3.500 0 3.500H7V13H5.500zM7 8.200v1.200h1.500c.4 0 .4-1.200 0-1.200z"/></symbol>
<symbol id="filew" viewBox="0 0 16 16"><path class="o" d="M2.500 1H10l3.500 3.500V15h-11zM10 1v3.500h3.500M4 7l1.700 6L8 8l2.300 5L12 7"/></symbol>
<symbol id="magic" viewBox="0 0 16 16"><path d="M.5 13.500L11 3l2 2L2.500 15.500z"/><path fill="#999" d="M13 0l.5 1.500L15 2l-1.500.5L13 4l-.5-1.500L11 2l1.500-.5z"/></symbol>
<symbol id="refresh" viewBox="0 0 16 16"><path class="o2" d="M2.500 7A5.700 5.700 0 0 1 13 4.500M13.500 9A5.700 5.700 0 0 1 3 11.500"/><path d="M14.500 1v5h-5zM1.500 15v-5h5z"/></symbol>
<symbol id="zoom" viewBox="0 0 16 16"><circle class="o2" cx="6.500" cy="6.500" r="5"/><path d="M10 11l1-1 5 4.500-1.500 1.500z"/><path d="M6 4h1.200v2H9v1.200H7.200V9H6V7.200H4V6h2z"/></symbol>
<symbol id="tags" viewBox="0 0 16 16"><path fill-rule="evenodd" d="M0 1h6l7.500 7.500-6 6L0 7zM2.500 3v1.500H4V3z"/><path class="o" d="M8 1l7.500 7.500-5.500 6"/></symbol>
<symbol id="sharesq" viewBox="0 0 16 16"><path fill-rule="evenodd" d="M3 1h10a2 2 0 0 1 2 2v10a2 2 0 0 1-2 2H3a2 2 0 0 1-2-2V3a2 2 0 0 1 2-2zM9 3.500V6c-3 0-5 2-5 5.500 1-2 3-2.700 5-2.700v2.700l4-4z"/></symbol>
<symbol id="moto" viewBox="0 0 16 16"><circle class="o" cx="3" cy="10" r="2.500"/><circle class="o" cx="13" cy="10" r="2.500"/><path d="M2 6h5l3-2h2l1 5-1 .5-1-3-3 3.500H5L3.500 7.500H2z"/></symbol>
<symbol id="spin" viewBox="0 0 16 16"><circle cx="8" cy="2" r="1.500"/><circle cx="12.500" cy="3.500" r="1.200"/><circle cx="14" cy="8" r=".9"/><circle cx="12.500" cy="12.500" r=".8"/><circle cx="8" cy="14" r=".8"/><circle cx="3.500" cy="12.500" r=".8"/><circle cx="2" cy="8" r="1"/><circle cx="3.500" cy="3.500" r="1.200"/></symbol>
<symbol id="book" viewBox="0 0 16 16"><path d="M4 1h11l-1.500 11H5a1.500 1.500 0 0 0 0 3h9v1H4a3 3 0 0 1-3-3z"/></symbol>
<symbol id="tv" viewBox="0 0 16 16"><path d="M0 0h16v12H0z"/></symbol>
<symbol id="home" viewBox="0 0 16 16"><path class="o" d="M.5 8L8 1l7.500 7M3 6v9h3.500v-5h3v5H13V6"/></symbol>
<symbol id="globe" viewBox="0 0 16 16"><circle cx="8" cy="8" r="7.500"/><path fill="none" stroke="#364150" stroke-width=".9" d="M8 .5v15M.5 8h15M1.500 4.500h13M1.500 11.500h13M8 .5c-5 4-5 11 0 15M8 .5c5 4 5 11 0 15"/></symbol>
<symbol id="search" viewBox="0 0 16 16"><circle class="o" cx="6.500" cy="6.500" r="5.500"/><path class="o" d="M10.500 10.500l5 5"/></symbol>
<symbol id="env" viewBox="0 0 16 16"><path class="o" d="M1 6l7-5 7 5v9H1zM1 6l7 5 7-5M1 15l5-5.500M15 15l-5-5.500"/></symbol>
<symbol id="v" viewBox="0 0 16 10"><path fill="none" stroke="currentColor" stroke-width="1.600" d="M1 1l7 7 7-7"/></symbol>
</defs></svg>
<div id="root">
<div id="top">
<div id="logo">上海邑泊信息科技</div><div id="burger"></div>
<svg class="tb" style="left:1648px"><use href="#bell"/></svg><div class="bd" style="left:1638px">2</div>
<svg class="tb" style="left:1697px"><use href="#env"/></svg><div class="bd" style="left:1688px">1</div>
<svg class="tb" style="left:1746px"><use href="#cal"/></svg><div class="bd" style="left:1737px">2</div>
<svg style="position:absolute;left:1791px;top:11px;width:22px;height:29px" viewBox="0 0 22 29"><defs><clipPath id="avc"><ellipse cx="11" cy="14.500" rx="11" ry="14.500"/></clipPath></defs><g clip-path="url(#avc)"><path fill="#cbb8ae" d="M0 0h22v29H0z"/><path fill="#4f1f2c" d="M0 0h9l-2 29H0z"/><path fill="#6b1e2e" d="M3 2h6L7 20H3z"/><path fill="#e6d9d2" d="M9 4h7v8H9z"/><path fill="#1c2632" d="M12 12h10v17H9z"/><path fill="#26303c" d="M8 0h14v5H8z"/><path fill="#f1ece8" d="M8 17h5l-2 12H7z"/></g></svg>
<div id="nm">史大江</div>
<svg style="position:absolute;left:1865px;top:25px;width:8px;height:5px;color:#8b98a8"><use href="#v"/></svg>
</div>

<div id="side">
<div style="position:absolute;left:18px;top:43px;color:#556274;line-height:20px">搜索...</div>
<svg style="position:absolute;left:199px;top:48px;width:15px;height:15px;color:#556274"><use href="#search"/></svg>
<div style="position:absolute;left:18px;top:66px;width:199px;height:1px;background:#4a5668"></div>
<div class="m" style="top:91px"><svg><use href="#home"/></svg>仪表盘<i></i></div>
<div class="m" style="top:133px;text-indent:33px"><svg style="left:17px;width:15px;height:15px;top:13px"><use href="#globe"/></svg>功能</div>
<div class="m" style="top:176px;background:#32c5d2;color:#fff"><svg style="color:#fff"><use href="#cogs"/></svg>系统管理<i style="border-color:#fff"></i></div>
<div class="s" style="top:224px"><svg><use href="#usero"/></svg>用户管理</div>
<div class="s" style="top:257px"><svg><use href="#users"/></svg>用户组维护</div>
<div class="s" style="top:290px"><svg><use href="#flago"/></svg>用户角色分配</div>
<div class="s" style="top:323px"><svg><use href="#usero2"/></svg>用户组用户分配</div>
<div class="s" style="top:356px"><svg><use href="#flag"/></svg>角色权限</div>
<div class="s" style="top:389px"><svg><use href="#key"/></svg>用户组权限</div>
<div class="s" style="top:422px"><svg><use href="#bell"/></svg>用户消息</div>
<div class="s" style="top:455px"><svg><use href="#sliders"/></svg>系统参数</div>
<div class="s" style="top:488px"><svg><use href="#cal"/></svg>节假日</div>
<div class="s" style="top:521px"><svg><use href="#db"/></svg>数据库管理</div>
<div class="s" style="top:554px"><svg><use href="#info"/></svg>用户个人信息维护</div>
<div class="s" style="top:587px;background:#3e4b5c"><svg style="color:#8193a8;width:12px;height:12px;left:46px;top:11px"><use href="#quest"/></svg>帮助</div>
<div class="dv" style="top:627px"></div>
<div class="m" style="top:628px"><svg><use href="#news"/></svg>内容管理<i></i></div><div class="dv" style="top:668px"></div>
<div class="m" style="top:669px"><svg><use href="#site"/></svg>公司管理<i></i></div><div class="dv" style="top:709px"></div>
<div class="m" style="top:710px"><svg><use href="#trophy"/></svg>会员管理<i></i></div><div class="dv" style="top:750px"></div>
<div class="m" style="top:751px"><svg><use href="#users"/></svg>人力资源管理<i></i></div><div class="dv" style="top:791px"></div>
<div class="m" style="top:792px"><svg><use href="#sticky"/></svg>合同管理<i></i></div><div class="dv" style="top:832px"></div>
<div class="m" style="top:833px"><svg><use href="#arch"/></svg>采购管理<i></i></div><div class="dv" style="top:873px"></div>
<div class="m" style="top:874px"><svg><use href="#cart"/></svg>订单管理<i></i></div><div class="dv" style="top:914px"></div>
<div class="m" style="top:915px"><svg><use href="#cubes"/></svg>项目管理<i></i></div><div class="dv" style="top:955px"></div>
<div class="m" style="top:956px"><svg><use href="#edit"/></svg>产品管理<i></i></div><div class="dv" style="top:996px"></div>
<div class="m" style="top:997px;height:32px"><svg><use href="#money"/></svg>财务管理<i></i></div>
</div>

<div id="crumb">
<svg style="position:absolute;left:22px;top:15px;width:15px;height:15px;color:#888"><use href="#home"/></svg>
<span style="left:42px">首页</span><u style="left:78px"></u><span style="left:92px">系统管理</span><u style="left:157px"></u><span style="left:172px">帮助</span><u style="left:210px"></u><span style="left:223px">查看列表</span>
</div>

<div class="c cy" style="left:255px;top:95px;height:162px;--l:31px"><h3><svg><use href="#news"/></svg><b style="--p:45%"></b>内容管理<svg class="v"><use href="#v"/></svg></h3><ul>
<li><svg><use href="#film"/></svg><b style="--p:25%"></b><span>频道维护</span></li>
<li><svg><use href="#info"/></svg><b style="--p:45%"></b><span>页面内容</span></li>
<li><svg><use href="#ext"/></svg><b style="--p:65%"></b><span>关键字链接</span></li>
<li><svg><use href="#area"/></svg><b style="--p:38%"></b><span>页面访问统计</span></li>
</ul></div>

<div class="c pu" style="left:255px;top:282px;height:799px;--l:30px"><h3><svg><use href="#users"/></svg><b style="--p:50%"></b>人力资源管理<svg class="v"><use href="#v"/></svg></h3><ul>
<li><svg><use href="#diamond"/></svg><b style="--p:3%"></b><span>职位描述</span></li>
<li><svg><use href="#award"/></svg><b style="--p:75%"></b><span>职称管理</span></li>
<li><svg><use href="#secret"/></svg><b style="--p:60%"></b><span>员工管理</span><ul>
<li><svg><use href="#user"/></svg><b style="--p:95%"></b><span>员工基本信息</span></li>
<li><svg><use href="#users"/></svg><b style="--p:55%"></b><span>团队管理</span></li>
<li><svg><use href="#usero"/></svg><b style="--p:55%"></b><span>团队成员</span></li>
<li><svg><use href="#hour"/></svg><b style="--p:40%"></b><span>员工收支</span></li>
<li><svg><use href="#map"/></svg><b style="--p:3%"></b><span>员工收支明细</span></li>
<li><svg><use href="#starh"/></svg><b style="--p:80%"></b><span>员工资质</span></li>
<li><svg><use href="#trophy"/></svg><b style="--p:35%"></b><span>工作经验</span></li>
<li><svg><use href="#grad"/></svg><b style="--p:90%"></b><span>教育经历</span></li>
<li><svg><use href="#umb"/></svg><b style="--p:90%"></b><span>授权书</span></li>
<li><svg><use href="#gavel"/></svg><b style="--p:25%"></b><span>授权书明细</span></li>
<li><svg><use href="#flagc"/></svg><b style="--p:75%"></b><span>岗位证书</span></li>
<li><svg><use href="#hand"/></svg><b style="--p:60%"></b><span>项目经验</span></li>
</ul></li>
<li><svg><use href="#brief"/></svg><b style="--p:60%"></b><span>培训管理</span><ul>
<li><svg><use href="#tasks"/></svg><b style="--p:65%"></b><span>培训计划</span></li>
<li><svg><use href="#frame"/></svg><b style="--p:95%"></b><span>员工培训</span></li>
<li><svg><use href="#eye"/></svg><b style="--p:80%"></b><span>培训人员</span></li>
<li><svg><use href="#arch"/></svg><b style="--p:0%"></b><span>外包培训</span></li>
<li><svg><use href="#bull"/></svg><b style="--p:35%"></b><span>外包培训人员</span></li>
</ul></li>
<li><svg><use href="#sv"/></svg><b style="--p:95%"></b><span>监督管理</span><ul>
<li><svg><use href="#tasks"/></svg><b style="--p:50%"></b><span>监督计划</span></li>
<li><svg><use href="#anchor"/></svg><b style="--p:95%"></b><span>员工监督</span></li>
<li><svg><use href="#bull"/></svg><b style="--p:50%"></b><span>监督人员</span></li>
<li><svg><use href="#bell"/></svg><b style="--p:95%"></b><span>监督时间</span></li>
<li><svg><use href="#calc"/></svg><b style="--p:80%"></b><span>监督人员时间</span></li>
</ul></li>
<li><svg><use href="#life"/></svg><b style="--p:20%"></b><span>绩效管理</span><ul>
<li><svg><use href="#chko"/></svg><b style="--p:50%"></b><span>绩效项目</span></li>
<li><svg><use href="#tago"/></svg><b style="--p:45%"></b><span>绩效期间</span></li>
<li><svg><use href="#signs"/></svg><b style="--p:20%"></b><span>绩效评分</span></li>
<li><svg><use href="#bookm"/></svg><b style="--p:0%"></b><span>绩效结果</span></li>
<li><svg><use href="#crop"/></svg><b style="--p:0%"></b><span>绩效评分明细</span></li>
</ul></li>
<li><svg><use href="#plane"/></svg><b style="--p:50%"></b><span>技能管理</span><ul>
<li><svg><use href="#coffee"/></svg><b style="--p:50%"></b><span>技能配置</span></li>
<li><svg><use href="#bulb"/></svg><b style="--p:55%"></b><span>员工技能</span></li>
<li><svg><use href="#edit"/></svg><b style="--p:45%"></b><span>员工技能明细</span></li>
</ul></li>
</ul></div>

<div class="c te w" style="left:531px;top:95px;height:242px;--l:29px"><h3><svg><use href="#arch"/></svg><b style="--p:60%"></b>采购管理<svg class="v"><use href="#v"/></svg></h3><ul>
<li><svg><use href="#aster"/></svg><b style="--p:45%"></b><span>原料维护</span></li>
<li><svg><use href="#binoc"/></svg><b style="--p:80%"></b><span>供应商维护</span></li>
<li><svg><use href="#cart"/></svg><b style="--p:90%"></b><span>采购管理</span></li>
<li><svg><use href="#truck"/></svg><b style="--p:95%"></b><span>出库</span></li>
<li><svg><use href="#checkc"/></svg><b style="--p:65%"></b><span>出库明细</span></li>
<li><svg><use href="#lizard"/></svg><b style="--p:85%"></b><span>入库</span></li>
<li><svg><use href="#objg"/></svg><b style="--p:15%"></b><span>入库明细</span></li>
<li><svg><use href="#db"/></svg><b style="--p:25%"></b><span>库存变化</span></li>
</ul></div>

<div class="c re w" style="left:531px;top:362px;height:182px;--l:29px"><h3><svg><use href="#edit"/></svg><b style="--p:55%"></b>产品管理<svg class="v"><use href="#v"/></svg></h3><ul>
<li><svg><use href="#cog"/></svg><b style="--p:70%"></b><span>产品结点维护</span></li>
<li><svg><use href="#puzzle"/></svg><b style="--p:80%"></b><span>产品结点链接</span></li>
<li><svg><use href="#signin"/></svg><b style="--p:15%"></b><span>产品结点链接访问</span></li>
<li><svg><use href="#balance"/></svg><b style="--p:45%"></b><span>资产负债</span></li>
<li><svg><use href="#bars"/></svg><b style="--p:65%"></b><span>资产负债明细</span></li>
</ul></div>

<div class="c pi w" style="left:531px;top:569px;height:122px;--l:31px"><h3><svg><use href="#diamond"/></svg><b style="--p:55%"></b>资产管理<svg class="v"><use href="#v"/></svg></h3><ul>
<li><svg><use href="#trophy"/></svg><b style="--p:95%"></b><span>资产维护</span></li>
<li><svg><use href="#umb"/></svg><b style="--p:20%"></b><span>资产处置</span></li>
</ul></div>

<div class="c re w" style="left:531px;top:716px;height:365px;--l:27px"><h3><svg><use href="#slid"/></svg><b style="--p:65%"></b>生产制造管理<svg class="v"><use href="#v"/></svg></h3><ul>
<li><svg><use href="#hdd"/></svg><b style="--p:50%"></b><span>设备类型</span></li>
<li><svg><use href="#wrench"/></svg><b style="--p:60%"></b><span>设备维护</span></li>
<li><svg><use href="#map"/></svg><b style="--p:15%"></b><span>设备维护日志</span></li>
<li><svg><use href="#dash"/></svg><b style="--p:95%"></b><span>工厂管理</span></li>
<li><svg><use href="#pin"/></svg><b style="--p:50%"></b><span>工种维护</span></li>
<li><svg><use href="#brush"/></svg><b style="--p:50%"></b><span>工人工种设置</span></li>
<li><svg><use href="#signs"/></svg><b style="--p:100%"></b><span>加工维护</span></li>
<li><svg><use href="#plusc"/></svg><b style="--p:90%"></b><span>加工租用配置</span></li>
<li><svg><use href="#paw"/></svg><b style="--p:80%"></b><span>加工原料配置</span></li>
<li><svg><use href="#magnet"/></svg><b style="--p:15%"></b><span>加工产品配置</span></li>
<li><svg><use href="#plug"/></svg><b style="--p:95%"></b><span>加工设备维护</span></li>
<li><svg><use href="#shield"/></svg><b style="--p:95%"></b><span>加工工种维护</span></li>
<li><svg><use href="#mappin"/></svg><b style="--p:95%"></b><span>加工执行日志</span></li>
<li><svg><use href="#recycle"/></svg><b style="--p:95%"></b><span>加工执行租用日志</span></li>
<li><svg><use href="#ship"/></svg><b style="--p:50%"></b><span>加工执行原料日志</span></li>
<li><svg><use href="#star"/></svg><b style="--p:95%"></b><span>加工执行产品日志</span></li>
</ul></div>

<div class="c st" style="left:807.5px;top:95px;height:182px;--l:32px"><h3><svg><use href="#cubes"/></svg><b style="--p:60%"></b>项目管理<svg class="v"><use href="#v"/></svg></h3><ul>
<li><svg><use href="#rocket"/></svg><b style="--p:90%"></b><span>项目维护</span></li>
<li><svg><use href="#tasks"/></svg><b style="--p:35%"></b><span>项目任务维护</span></li>
<li><svg><use href="#staro"/></svg><b style="--p:0%"></b><span>文章维护</span></li>
<li><svg><use href="#tag"/></svg><b style="--p:85%"></b><span>Tag归集</span></li>
<li><svg><use href="#barso"/></svg><b style="--p:95%"></b><span>任务访问统计</span></li>
</ul></div>

<div class="c bl" style="left:807.5px;top:302px;height:462px;--l:32px"><h3><svg><use href="#balance"/></svg><b style="--p:60%"></b>会计管理<svg class="v"><use href="#v"/></svg></h3><ul>
<li><svg><use href="#bank"/></svg><b style="--p:90%"></b><span>法人维护</span></li>
<li><svg><use href="#diamond"/></svg><b style="--p:30%"></b><span>资源单位配置</span></li>
<li><svg><use href="#exch"/></svg><b style="--p:25%"></b><span>资源汇率</span></li>
<li><svg><use href="#hourg"/></svg><b style="--p:55%"></b><span>交易类型</span></li>
<li><svg><use href="#puzzle"/></svg><b style="--p:30%"></b><span>交易明细类型</span></li>
<li><svg><use href="#clip"/></svg><b style="--p:60%"></b><span>账户维护</span></li>
<li><svg><use href="#news"/></svg><b style="--p:45%"></b><span>账户余额</span></li>
<li><svg><use href="#life"/></svg><b style="--p:50%"></b><span>套账维护</span></li>
<li><svg><use href="#bars3"/></svg><b style="--p:20%"></b><span>会计科目维护</span></li>
<li><svg><use href="#fork"/></svg><b style="--p:95%"></b><span>入账模板维护</span></li>
<li><svg><use href="#chk"/></svg><b style="--p:90%"></b><span>交易维护</span></li>
<li><svg><use href="#dots"/></svg><b style="--p:80%"></b><span>交易明细维护</span></li>
<li><svg><use href="#tasks"/></svg><b style="--p:95%"></b><span>总账管理</span></li>
<li><svg><use href="#tty"/></svg><b style="--p:50%"></b><span>入账处理</span></li>
<li><svg><use href="#coffee"/></svg><b style="--p:30%"></b><span>交易明细类型默认值</span></li>
<li><svg><use href="#camera"/></svg><b style="--p:65%"></b><span>交易类型默认值</span></li>
<li><svg><use href="#money"/></svg><b style="--p:70%"></b><span>交易发票维护</span></li>
<li><svg><use href="#road"/></svg><b style="--p:95%"></b><span>交易结算</span></li>
<li><svg><use href="#retw"/></svg><b style="--p:5%"></b><span>交易结算明细</span></li>
</ul></div>

<div class="c ye" style="left:807.5px;top:789px;height:262px;--l:31px"><h3><svg><use href="#bank"/></svg><b style="--p:55%"></b>内部银行<svg class="v"><use href="#v"/></svg></h3><ul>
<li><svg><use href="#bank"/></svg><b style="--p:5%"></b><span>财务归集中心</span></li>
<li><svg><use href="#batt"/></svg><b style="--p:45%"></b><span>账户余额</span></li>
<li><svg><use href="#bull"/></svg><b style="--p:35%"></b><span>交易管理</span></li>
<li><svg><use href="#bell"/></svg><b style="--p:60%"></b><span>等待结算</span></li>
<li><svg><use href="#checkf"/></svg><b style="--p:80%"></b><span>结算维护</span></li>
<li><svg><use href="#cc"/></svg><b style="--p:50%"></b><span>结算明细维护</span></li>
<li><svg><use href="#inbox"/></svg><b style="--p:80%"></b><span>费率设置</span></li>
<li><svg><use href="#larr"/></svg><b style="--p:90%"></b><span>借款管理</span></li>
<li><svg><use href="#db"/></svg><b style="--p:55%"></b><span>存款与保证金管理</span></li>
</ul></div>

<div class="c bl" style="left:807.5px;top:1076px;height:4px;border:0;background:#3598dc"></div>

<div class="c ye" style="left:1084px;top:95px;height:162px;--l:28px"><h3><svg><use href="#trophy"/></svg><b style="--p:60%"></b>会员管理<svg class="v"><use href="#v"/></svg></h3><ul>
<li><svg><use href="#diamond"/></svg><b style="--p:80%"></b><span>会员维护</span></li>
<li><svg><use href="#award"/></svg><b style="--p:70%"></b><span>会员角色</span></li>
<li><svg><use href="#site"/></svg><b style="--p:65%"></b><span>多级分销分润</span></li>
<li><svg><use href="#share"/></svg><b style="--p:0%"></b><span>销售分润支付</span></li>
</ul></div>

<div class="c pi" style="left:1084px;top:282px;height:282px;--l:28px"><h3><svg><use href="#cart"/></svg><b style="--p:65%"></b>订单管理<svg class="v"><use href="#v"/></svg></h3><ul>
<li><svg><use href="#db"/></svg><b style="--p:90%"></b><span>商品维护</span></li>
<li><svg><use href="#coffee"/></svg><b style="--p:40%"></b><span>销售机会管理</span></li>
<li><svg><use href="#hist"/></svg><b style="--p:60%"></b><span>商品库存流水</span></li>
<li><svg><use href="#signin"/></svg><b style="--p:95%"></b><span>商品入库</span></li>
<li><svg><use href="#bookm"/></svg><b style="--p:45%"></b><span>订单录入</span></li>
<li><svg><use href="#signout"/></svg><b style="--p:65%"></b><span>商品出库</span></li>
<li><svg><use href="#tty"/></svg><b style="--p:30%"></b><span>客户管理</span></li>
<li><svg><use href="#card"/></svg><b style="--p:0%"></b><span>客户订单开票</span></li>
<li><svg><use href="#area"/></svg><b style="--p:85%"></b><span>数据统计</span></li>
<li><svg><use href="#tty"/></svg><b style="--p:90%"></b><span>门店管理</span></li>
</ul></div>

<div class="c st" style="left:1084px;top:589px;height:362px;--l:29px"><h3><svg><use href="#truck"/></svg><b style="--p:55%"></b>仓储物流管理<svg class="v"><use href="#v"/></svg></h3><ul>
<li><svg><use href="#cubes"/></svg><b style="--p:0%"></b><span>库存维护</span></li>
<li><svg><use href="#build"/></svg><b style="--p:95%"></b><span>仓库维护</span></li>
<li><svg><use href="#arch"/></svg><b style="--p:50%"></b><span>库柜容器维护</span></li>
<li><svg><use href="#arrows"/></svg><b style="--p:70%"></b><span>物料类型</span></li>
<li><svg><use href="#coffee"/></svg><b style="--p:60%"></b><span>物料维护</span></li>
<li><svg><use href="#flask"/></svg><b style="--p:0%"></b><span>物品管理</span></li>
<li><svg><use href="#flago"/></svg><b style="--p:80%"></b><span>物品变更</span></li>
<li><svg><use href="#filter"/></svg><b style="--p:80%"></b><span>库存变化流水</span></li>
<li><svg><use href="#umb"/></svg><b style="--p:85%"></b><span>物品移库管理</span></li>
<li><svg><use href="#sv"/></svg><b style="--p:30%"></b><span>承运人维护</span></li>
<li><svg><use href="#truck"/></svg><b style="--p:70%"></b><span>运输管理</span></li>
<li><svg><use href="#tasks"/></svg><b style="--p:35%"></b><span>运输明细</span></li>
<li><svg><use href="#barcode"/></svg><b style="--p:0%"></b><span>图码管理</span></li>
<li><svg><use href="#bolt"/></svg><b style="--p:0%"></b><span>扫码日志维护</span></li>
</ul></div>

<div class="c ye" style="left:1084px;top:976px;height:105px;--l:29px"><h3><svg><use href="#shuf"/></svg><b style="--p:65%"></b>工作流管理<svg class="v"><use href="#v"/></svg></h3><ul>
<li><svg><use href="#kbd"/></svg><b style="--p:45%"></b><span>表单类型</span></li>
<li><svg><use href="#card"/></svg><b style="--p:35%"></b><span>表单维护</span></li>
<li><svg><use href="#news"/></svg><b style="--p:60%"></b><span>表单字段配置</span></li>
</ul></div>

<div class="c re w" style="left:1360px;top:95px;height:322px;--l:30px"><h3><svg><use href="#cogs"/></svg><b style="--p:50%"></b>系统管理<svg class="v"><use href="#v"/></svg></h3><ul>
<li><svg><use href="#usero"/></svg><b style="--p:75%"></b><span>用户管理</span></li>
<li><svg><use href="#users"/></svg><b style="--p:75%"></b><span>用户组维护</span></li>
<li><svg><use href="#flago"/></svg><b style="--p:60%"></b><span>用户角色分配</span></li>
<li><svg><use href="#usero2"/></svg><b style="--p:55%"></b><span>用户组用户分配</span></li>
<li><svg><use href="#flag"/></svg><b style="--p:30%"></b><span>角色权限</span></li>
<li><svg><use href="#key"/></svg><b style="--p:15%"></b><span>用户组权限</span></li>
<li><svg><use href="#bell"/></svg><b style="--p:75%"></b><span>用户消息</span></li>
<li><svg><use href="#sliders"/></svg><b style="--p:70%"></b><span>系统参数</span></li>
<li><svg><use href="#cal"/></svg><b style="--p:90%"></b><span>节假日</span></li>
<li><svg><use href="#db"/></svg><b style="--p:25%"></b><span>数据库管理</span></li>
<li><svg><use href="#info"/></svg><b style="--p:0%"></b><span>用户个人信息维护</span></li>
<li><svg><use href="#quest"/></svg><b style="--p:0%"></b><span>帮助</span></li>
</ul></div>

<div class="c cy w" style="left:1360px;top:442px;height:302px;--l:30px"><h3><svg><use href="#money"/></svg><b style="--p:50%"></b>财务管理<svg class="v"><use href="#v"/></svg></h3><ul>
<li><svg><use href="#gift"/></svg><b style="--p:60%"></b><span>预算维护</span></li>
<li><svg><use href="#edit"/></svg><b style="--p:30%"></b><span>预算变更</span></li>
<li><svg><use href="#starh"/></svg><b style="--p:75%"></b><span>预算申请及使用</span></li>
<li><svg><use href="#car"/></svg><b style="--p:80%"></b><span>差旅申请</span></li>
<li><svg><use href="#userp"/></svg><b style="--p:25%"></b><span>差旅同行人员</span></li>
<li><svg><use href="#sticky"/></svg><b style="--p:30%"></b><span>差旅报销项目</span></li>
<li><svg><use href="#recycle"/></svg><b style="--p:0%"></b><span>差旅标准维护</span></li>
<li><svg><use href="#medkit"/></svg><b style="--p:75%"></b><span>费用标准维护</span></li>
<li><svg><use href="#money"/></svg><b style="--p:40%"></b><span>发票管理</span></li>
<li><svg><use href="#map"/></svg><b style="--p:20%"></b><span>预算实际使用发票</span></li>
<li><svg><use href="#bank"/></svg><b style="--p:45%"></b><span>银行流水维护</span></li>
</ul></div>

<div class="c pu w" style="left:1360px;top:769px;height:242px;--l:30px"><h3><svg><use href="#cogs"/></svg><b style="--p:55%"></b>客户关系管理<svg class="v"><use href="#v"/></svg></h3><ul>
<li><svg><use href="#send"/></svg><b style="--p:15%"></b><span>市场细分设置</span></li>
<li><svg><use href="#cross"/></svg><b style="--p:55%"></b><span>目标设置</span></li>
<li><svg><use href="#compass"/></svg><b style="--p:70%"></b><span>销售项目管理</span></li>
<li><svg><use href="#binoc"/></svg><b style="--p:70%"></b><span>潜在客户维护</span></li>
<li><svg><use href="#male"/></svg><b style="--p:75%"></b><span>客户拜访记录</span></li>
<li><svg><use href="#diamond"/></svg><b style="--p:50%"></b><span>客户管理</span></li>
<li><svg><use href="#comment"/></svg><b style="--p:90%"></b><span>客户沟通管理</span></li>
<li><svg><use href="#cube"/></svg><b style="--p:0%"></b><span>客户项目管理</span></li>
</ul></div>

<div class="c te w" style="left:1360px;top:1036px;height:45px;--l:29px"><h3><svg><use href="#tasks"/></svg><b style="--p:60%"></b>服务管理<svg class="v"><use href="#v"/></svg></h3></div>

<div class="c bl" style="left:1636.5px;top:95px;height:162px;--l:29px"><h3><svg><use href="#site"/></svg><b style="--p:45%"></b>公司管理<svg class="v"><use href="#v"/></svg></h3><ul>
<li><svg><use href="#buildf"/></svg><b style="--p:30%"></b><span>业务单位</span></li>
<li><svg><use href="#mapf"/></svg><b style="--p:25%"></b><span>部门管理</span></li>
<li><svg><use href="#filep"/></svg><b style="--p:55%"></b><span>岗位管理</span></li>
<li><svg><use href="#news"/></svg><b style="--p:50%"></b><span>区域地点</span></li>
</ul></div>

<div class="c or" style="left:1636.5px;top:282px;height:322px;--l:27px"><h3><svg><use href="#sticky"/></svg><b style="--p:60%"></b>合同管理<svg class="v"><use href="#v"/></svg></h3><ul>
<li><svg><use href="#filew"/></svg><b style="--p:95%"></b><span>合同维护</span></li>
<li><svg><use href="#money"/></svg><b style="--p:25%"></b><span>发票管理</span></li>
<li><svg><use href="#map"/></svg><b style="--p:20%"></b><span>票据管理</span></li>
<li><svg><use href="#calg"/></svg><b style="--p:95%"></b><span>合同日记簿</span></li>
<li><svg><use href="#cubes"/></svg><b style="--p:95%"></b><span>合同分类</span></li>
<li><svg><use href="#magic"/></svg><b style="--p:35%"></b><span>合同操作</span></li>
<li><svg><use href="#hist"/></svg><b style="--p:95%"></b><span>合同事件</span></li>
<li><svg><use href="#refresh"/></svg><b style="--p:65%"></b><span>合同协商</span></li>
<li><svg><use href="#zoom"/></svg><b style="--p:80%"></b><span>合同预测规则</span></li>
<li><svg><use href="#tags"/></svg><b style="--p:15%"></b><span>合同条款</span></li>
<li><svg><use href="#tasks"/></svg><b style="--p:55%"></b><span>合同条款项目</span></li>
<li><svg><use href="#sharesq"/></svg><b style="--p:70%"></b><span>导出合同</span></li>
</ul></div>

<div class="c or" style="left:1636.5px;top:629px;height:302px;--l:29px"><h3><svg><use href="#area"/></svg><b style="--p:55%"></b>销售报价管理<svg class="v"><use href="#v"/></svg></h3><ul>
<li><svg><use href="#moto"/></svg><b style="--p:75%"></b><span>产品维护</span></li>
<li><svg><use href="#wrench"/></svg><b style="--p:10%"></b><span>功能维护</span></li>
<li><svg><use href="#taxi"/></svg><b style="--p:45%"></b><span>服务维护</span></li>
<li><svg><use href="#tasks"/></svg><b style="--p:25%"></b><span>服务任务维护</span></li>
<li><svg><use href="#spin"/></svg><b style="--p:35%"></b><span>成本维护</span></li>
<li><svg><use href="#secret"/></svg><b style="--p:70%"></b><span>客户维护</span></li>
<li><svg><use href="#peace"/></svg><b style="--p:15%"></b><span>订单报价</span></li>
<li><svg><use href="#kbd"/></svg><b style="--p:70%"></b><span>报价项目维护</span></li>
<li><svg><use href="#calg"/></svg><b style="--p:90%"></b><span>成本日志</span></li>
<li><svg><use href="#edit"/></svg><b style="--p:55%"></b><span>销售合同缔约管理</span></li>
<li><svg><use href="#book"/></svg><b style="--p:90%"></b><span>缔约条款管理</span></li>
</ul></div>

<div class="c cy" style="left:1636.5px;top:956px;height:125px;--l:29px"><h3><svg><use href="#edit"/></svg><b style="--p:40%"></b>车辆管理<svg class="v"><use href="#v"/></svg></h3><ul>
<li><svg><use href="#car"/></svg><b style="--p:35%"></b><span>车辆信息</span></li>
<li><svg><use href="#arch"/></svg><b style="--p:45%"></b><span>车辆保险</span></li>
<li><svg><use href="#wrench"/></svg><b style="--p:10%"></b><span>车辆保养</span></li>
<li><svg><use href="#tv"/></svg><b style="--p:0%"></b><span>车辆加油</span></li>
</ul></div>

<div id="sb"><div id="th"></div>
<svg style="position:absolute;left:4px;top:7px;width:8px;height:5px;color:#555;transform:scaleY(-1)"><use href="#v"/></svg>
<svg style="position:absolute;left:4px;top:1068px;width:8px;height:5px;color:#555"><use href="#v"/></svg></div>
<div id="fab"><i style="top:23px"></i><i style="top:29px"></i><i style="top:35px"></i></div>
</div>
</body></html>
